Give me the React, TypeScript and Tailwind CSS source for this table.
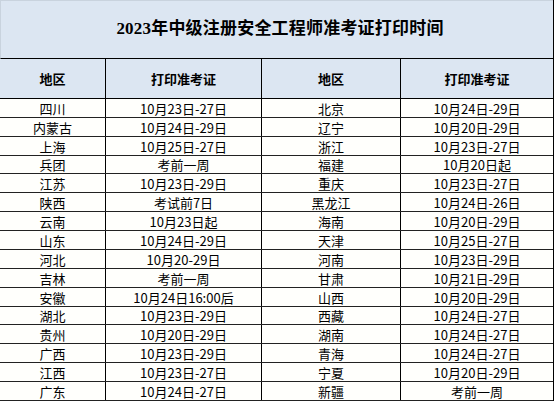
const rows: [string, string, string, string][] = [
  ["四川", "10月23日-27日", "北京", "10月24日-29日"],
  ["内蒙古", "10月24日-29日", "辽宁", "10月20日-29日"],
  ["上海", "10月25日-27日", "浙江", "10月23日-27日"],
  ["兵团", "考前一周", "福建", "10月20日起"],
  ["江苏", "10月23日-29日", "重庆", "10月23日-27日"],
  ["陕西", "考试前7日", "黑龙江", "10月24日-26日"],
  ["云南", "10月23日起", "海南", "10月20日-29日"],
  ["山东", "10月24日-29日", "天津", "10月25日-27日"],
  ["河北", "10月20-29日", "河南", "10月23日-29日"],
  ["吉林", "考前一周", "甘肃", "10月21日-29日"],
  ["安徽", "10月24日16:00后", "山西", "10月20日-29日"],
  ["湖北", "10月23日-29日", "西藏", "10月24日-27日"],
  ["贵州", "10月20日-29日", "湖南", "10月24日-27日"],
  ["广西", "10月23日-29日", "青海", "10月24日-27日"],
  ["江西", "10月23日-27日", "宁夏", "10月20日-29日"],
  ["广东", "10月24日-27日", "新疆", "考前一周"],
];

const cols = "grid grid-cols-[106px_156px_139px_152px]";

export default function App() {
  return (
    <div className="w-[556px] h-[401px] overflow-hidden bg-white text-black font-['Noto_Sans_CJK_SC',sans-serif]">
      <div className="w-[554px] border-r border-black">
        {/* 标题 */}
        <div className="h-[59px] bg-[#dce6f2] border-t border-l border-[#c9d3de] border-b border-b-black flex items-center justify-center pl-[6px] pb-[2px]">
          <span className="text-[17px] font-bold tracking-[0.2px] font-['Liberation_Serif','Noto_Sans_CJK_SC',serif]">
            2023年中级注册安全工程师准考证打印时间
          </span>
        </div>

        {/* 表头 */}
        <div className={`${cols} h-[40px] bg-[#dce6f2] border-b border-black text-[13px] font-bold`}>
          {["地区", "打印准考证", "地区", "打印准考证"].map((t, i) => (
            <div
              key={i}
              className={`flex items-center justify-center ${i < 3 ? "border-r border-black" : ""}`}
            >
              {t}
            </div>
          ))}
        </div>

        {/* 数据 */}
        {rows.map((r, idx) => (
          <div
            key={idx}
            className={`${cols} ${idx % 8 === 3 ? "h-[18px]" : "h-[19px]"} bg-[#fffffc] border-b border-[#222] text-[13px] leading-none`}
          >
            {r.map((t, i) => (
              <div
                key={i}
                className={`flex items-center justify-center ${i < 3 ? "border-r border-black" : ""}`}
              >
                {t}
              </div>
            ))}
          </div>
        ))}
      </div>
    </div>
  );
}
